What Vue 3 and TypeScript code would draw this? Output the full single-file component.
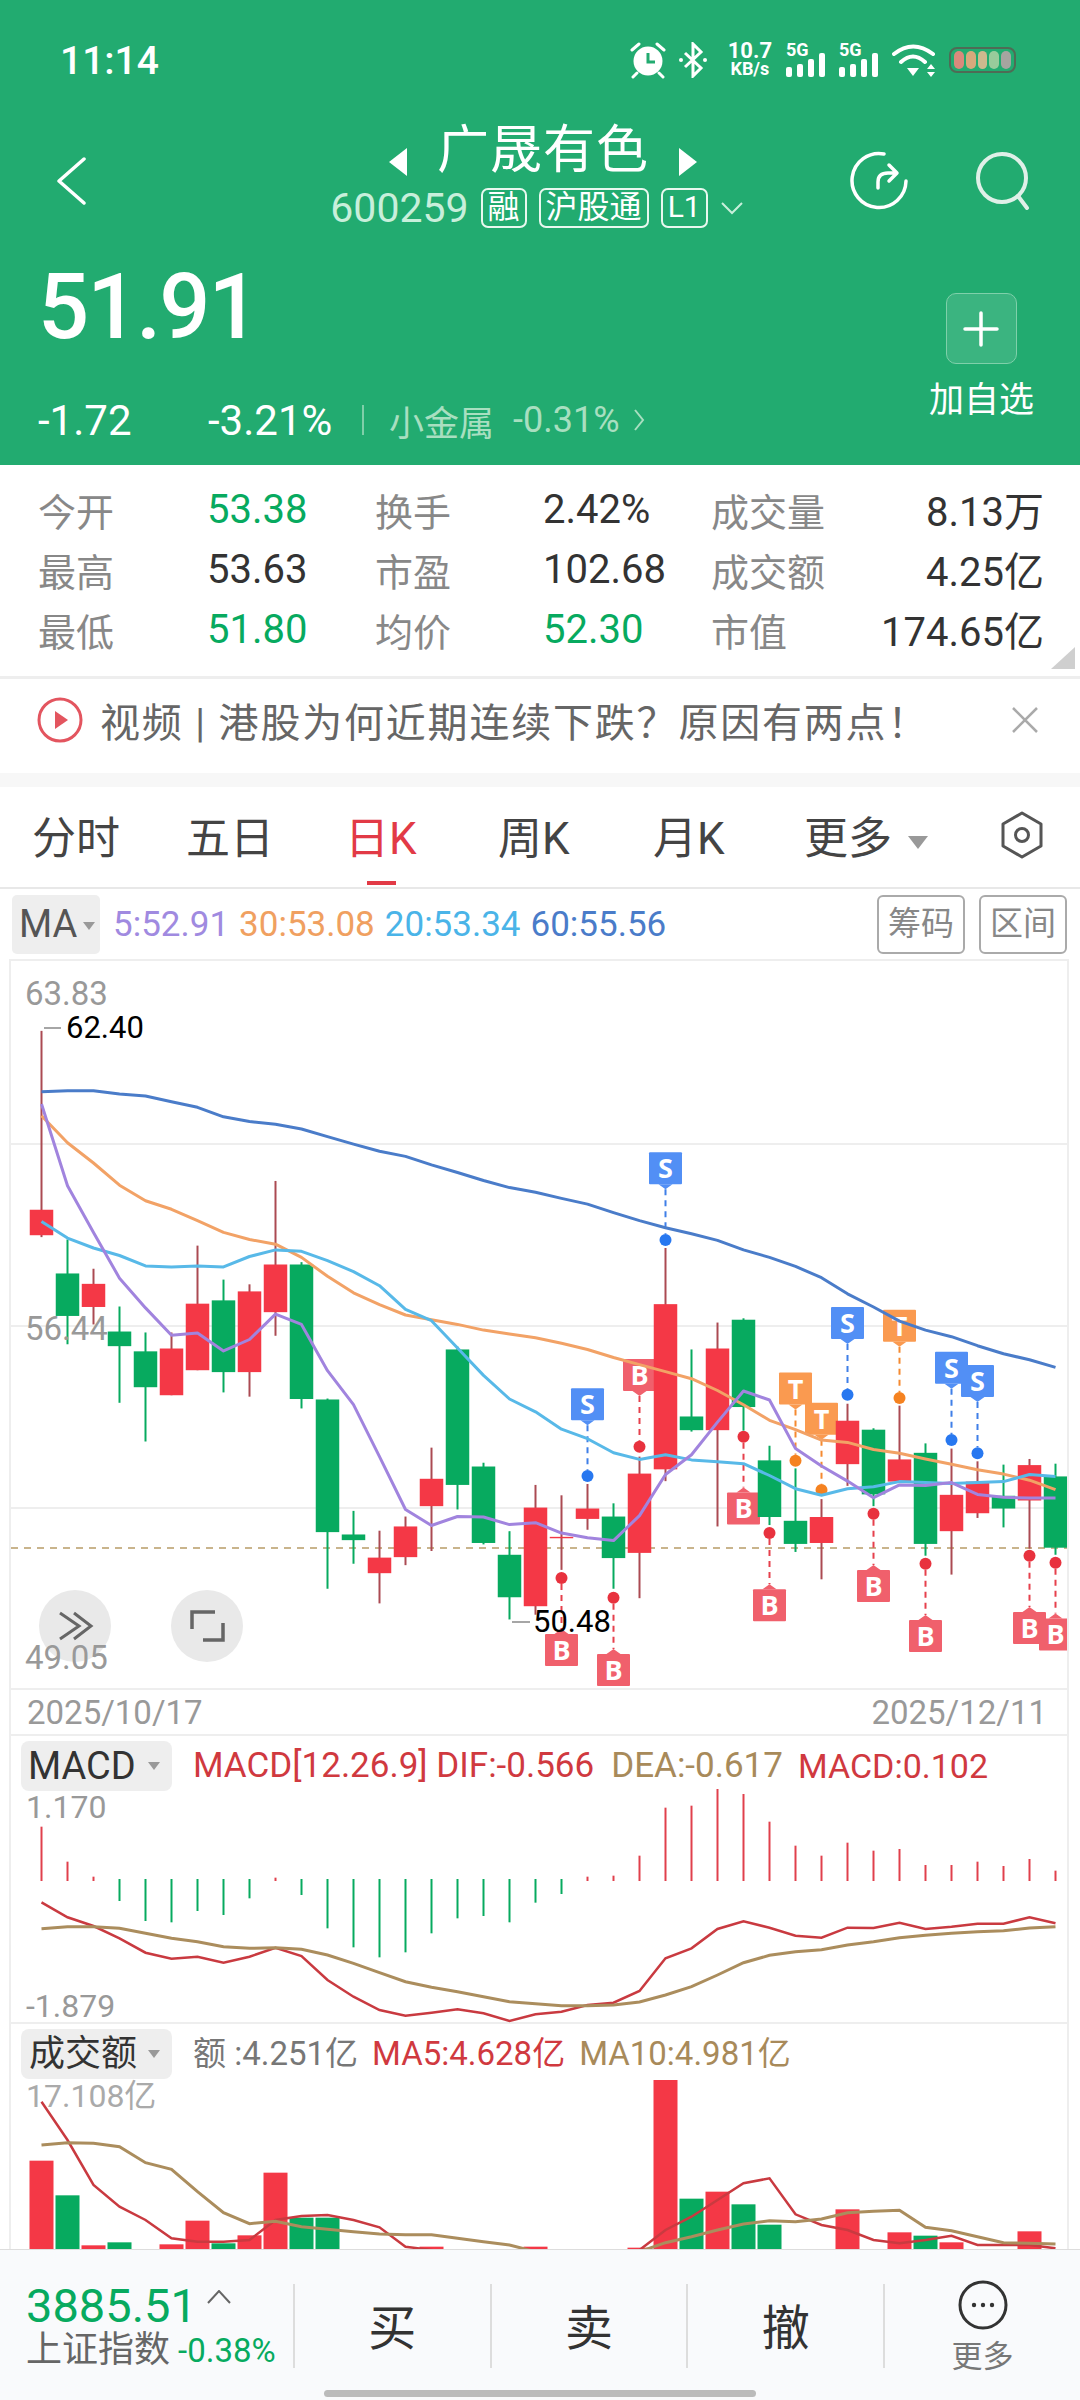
<script setup lang="ts">
interface Candle {
  hi: number
  top: number
  bottom: number
  lo: number
  up: boolean
}

interface Marker {
  i: number
  kind: 'S' | 'T' | 'B'
  tag: number
  dot: number
}

const barX = (i: number) => 41.5 + 26 * i
const priceY = (v: number) => v * 0.472
const macdY = (v: number) => (v - 333) / 3
const volY = (v: number) => (v - 177) / 3

const toPoints = (list: number[], y: (v: number) => number) =>
  list.map((v, i) => `${barX(i)},${y(v).toFixed(1)}`).join(' ')

const raw: [number, number, number, number, number][] = [
  [148, 527, 581, 585, 1], [590, 662, 752, 812, 0], [652, 684, 733, 770, 1], [732, 785, 816, 936, 0],
  [787, 827, 903, 1018, 0], [787, 821, 920, 920, 1], [603, 726, 867, 867, 1], [675, 719, 871, 914, 0],
  [685, 700, 871, 923, 1], [466, 643, 744, 794, 1], [638, 643, 928, 948, 0], [927, 929, 1210, 1330, 0],
  [1165, 1215, 1227, 1277, 0], [1207, 1264, 1297, 1361, 1], [1177, 1198, 1263, 1280, 1], [1031, 1097, 1155, 1250, 1],
  [817, 823, 1110, 1162, 0], [1063, 1071, 1233, 1236, 0], [1208, 1258, 1348, 1395, 0], [1110, 1158, 1367, 1385, 1],
  [1132, 1220, 1223, 1290, 1], [1108, 1160, 1182, 1205, 1], [1149, 1177, 1265, 1330, 0], [1050, 1086, 1254, 1350, 1],
  [608, 727, 1077, 1102, 1], [823, 965, 994, 997, 0], [766, 821, 994, 1198, 1], [757, 760, 945, 995, 0],
  [1027, 1058, 1178, 1195, 0], [1075, 1186, 1235, 1252, 0], [1140, 1178, 1233, 1310, 1], [938, 974, 1066, 1112, 1],
  [990, 993, 1130, 1155, 0], [942, 1056, 1103, 1105, 1], [1022, 1042, 1235, 1260, 0], [1033, 1131, 1208, 1300, 1],
  [1060, 1103, 1170, 1180, 1], [1067, 1133, 1160, 1200, 0], [1055, 1068, 1143, 1245, 1], [1065, 1092, 1243, 1258, 0]
]

const candles: Candle[] = raw.map(([hi, top, bottom, lo, up]) => ({ hi, top, bottom, lo, up: up === 1 }))

const ma60 = [277, 275, 275, 282, 286, 298, 310, 330, 340, 346, 356, 372, 388, 403, 414, 432, 448, 465, 480, 490, 503, 515, 533, 550, 565, 578, 592, 612, 628, 647, 671, 705, 733, 763, 782, 796, 815, 832, 845, 861]
const ma30 = [328, 385, 428, 475, 508, 526, 550, 575, 590, 600, 628, 668, 703, 728, 750, 760, 770, 782, 790, 798, 810, 823, 840, 855, 870, 885, 910, 940, 973, 993, 1015, 1020, 1035, 1043, 1055, 1066, 1078, 1087, 1100, 1120]
const ma20 = [552, 587, 608, 624, 646, 648, 646, 648, 626, 612, 615, 635, 658, 688, 738, 762, 820, 878, 928, 955, 992, 1012, 1042, 1056, 1046, 1057, 1061, 1065, 1090, 1118, 1132, 1118, 1114, 1103, 1105, 1107, 1105, 1103, 1088, 1092]
const ma5 = [303, 476, 575, 672, 735, 793, 788, 826, 802, 748, 770, 868, 940, 1050, 1162, 1196, 1177, 1178, 1194, 1190, 1212, 1222, 1228, 1175, 1088, 1046, 977, 911, 930, 1033, 1070, 1102, 1137, 1110, 1111, 1105, 1130, 1136, 1138, 1138]

const maLines = [
  { color: '#4a7cc9', points: toPoints(ma60, priceY) },
  { color: '#f2a266', points: toPoints(ma30, priceY) },
  { color: '#58b9e8', points: toPoints(ma20, priceY) },
  { color: '#a184de', points: toPoints(ma5, priceY) }
]

const markerColors = {
  S: { tag: '#528ff5', line: '#3f7fe8', dot: '#2878f0' },
  T: { tag: '#fa9a50', line: '#f58a30', dot: '#f58220' },
  B: { tag: '#f0606c', line: '#e6404c', dot: '#e8323e' }
}

const markers: Marker[] = [
  { i: 24, kind: 'S', tag: 405, dot: 591 },
  { i: 21, kind: 'S', tag: 905, dot: 1091 },
  { i: 31, kind: 'S', tag: 733, dot: 919 },
  { i: 35, kind: 'S', tag: 828, dot: 1015 },
  { i: 36, kind: 'S', tag: 856, dot: 1043 },
  { i: 29, kind: 'T', tag: 872, dot: 1059 },
  { i: 30, kind: 'T', tag: 936, dot: 1121 },
  { i: 33, kind: 'T', tag: 739, dot: 926 },
  { i: 23, kind: 'B', tag: 843, dot: 1029 },
  { i: 20, kind: 'B', tag: 1426, dot: 1307 },
  { i: 22, kind: 'B', tag: 1468, dot: 1349 },
  { i: 27, kind: 'B', tag: 1126, dot: 1008 },
  { i: 28, kind: 'B', tag: 1331, dot: 1212 },
  { i: 32, kind: 'B', tag: 1290, dot: 1171 },
  { i: 34, kind: 'B', tag: 1396, dot: 1277 },
  { i: 38, kind: 'B', tag: 1379, dot: 1260 },
  { i: 39, kind: 'B', tag: 1393, dot: 1275 }
]

function tagPointer(m: Marker) {
  const x = barX(m.i)
  const top = priceY(m.tag)
  const above = m.tag < m.dot
  const edge = above ? top + 32 : top
  const tip = above ? edge + 5 : edge - 5
  return `${x - 7},${edge} ${x + 7},${edge} ${x},${tip}`
}

function tagLine(m: Marker) {
  const above = m.tag < m.dot
  return {
    y1: priceY(above ? m.tag : m.dot) + (above ? 37 : 6),
    y2: priceY(above ? m.dot : m.tag) - (above ? 6 : 5)
  }
}

// [end y, is red]
const macdBars: [number, boolean][] = [
  [440, true], [545, true], [590, true], [663, false], [723, false], [727, false], [693, false], [705, false],
  [655, false], [593, true], [645, false], [745, false], [802, false], [832, false], [817, false], [760, false],
  [715, false], [708, false], [727, false], [668, false], [642, false], [590, true], [587, true], [527, true],
  [383, true], [377, true], [327, true], [342, true], [425, true], [497, true], [527, true], [488, true],
  [512, true], [507, true], [555, true], [555, true], [545, true], [558, true], [537, true], [572, true]
]

const dif = [667, 712, 738, 775, 818, 836, 830, 848, 830, 803, 828, 900, 950, 990, 1007, 998, 988, 1000, 1023, 1003, 995, 975, 968, 933, 835, 805, 747, 724, 743, 767, 773, 743, 744, 728, 747, 740, 731, 731, 712, 730]
const dea = [746, 740, 740, 745, 760, 775, 785, 800, 805, 803, 808, 825, 850, 878, 905, 922, 935, 950, 965, 971, 977, 977, 975, 966, 945, 920, 885, 848, 826, 815, 809, 795, 785, 773, 766, 760, 755, 752, 744, 740]

const volumes: { i: number; top: number; up: boolean }[] = [
  { i: 0, top: 422, up: true }, { i: 1, top: 526, up: false }, { i: 2, top: 676, up: true }, { i: 3, top: 667, up: false },
  { i: 5, top: 673, up: true }, { i: 6, top: 602, up: true }, { i: 7, top: 670, up: false }, { i: 8, top: 646, up: true },
  { i: 9, top: 458, up: true }, { i: 10, top: 593, up: false }, { i: 11, top: 593, up: false }, { i: 15, top: 680, up: true },
  { i: 19, top: 680, up: true }, { i: 23, top: 683, up: true }, { i: 24, top: 180, up: true }, { i: 25, top: 536, up: false },
  { i: 26, top: 515, up: true }, { i: 27, top: 553, up: false }, { i: 28, top: 614, up: false }, { i: 31, top: 568, up: true },
  { i: 33, top: 637, up: true }, { i: 34, top: 647, up: false }, { i: 35, top: 667, up: true }, { i: 38, top: 634, up: true }
]

const volMa5 = [245, 360, 495, 560, 600, 655, 665, 665, 660, 600, 588, 585, 600, 622, 680, 690, 700, 700, 700, 700, 700, 700, 700, 690, 630, 590, 540, 490, 475, 583, 615, 630, 660, 670, 660, 647, 675, 675, 675, 685]
const volMa10 = [375, 368, 370, 380, 428, 448, 515, 578, 611, 604, 620, 628, 635, 642, 644, 644, 655, 665, 675, 695, 700, 700, 700, 695, 668, 650, 630, 612, 602, 605, 597, 578, 574, 571, 622, 632, 650, 668, 670, 672]

const stats = [
  ['今开', '53.38', 'down', '换手', '2.42%', '', '成交量', '8.13万', ''],
  ['最高', '53.63', '', '市盈', '102.68', '', '成交额', '4.25亿', ''],
  ['最低', '51.80', 'down', '均价', '52.30', 'down', '市值', '174.65亿', '']
]

const tabs = ['分时', '五日', '日K', '周K', '月K']
</script>

<template>
  <div class="page">
    <header class="head">
      <div class="status-bar">
        <span class="time">11:14</span>
        <div class="status-icons">
          <svg width="36" height="38" viewBox="0 0 36 38">
            <circle cx="18" cy="20" r="14.5" fill="#fff" />
            <path d="M18 12v9h7" fill="none" stroke="#22ab70" stroke-width="3" />
            <path d="M2 9l7-6M34 9l-7-6M7 32l-4 4M29 32l4 4" stroke="#fff" stroke-width="3" stroke-linecap="round" />
          </svg>
          <svg class="bluetooth" width="28" height="36" viewBox="0 0 28 36">
            <path d="M6 11l16 15-8 8V2l8 8-16 15" fill="none" stroke="#fff" stroke-width="3" />
            <circle cx="2" cy="18" r="2" fill="#fff" />
            <circle cx="26" cy="18" r="2" fill="#fff" />
          </svg>
          <div class="net-speed">
            <span class="speed">10.7</span>
            <span class="unit">KB/s</span>
          </div>
          <div v-for="n in 2" :key="n" class="signal">
            <span class="five-g">5G</span>
            <svg width="40" height="24" viewBox="0 0 40 24">
              <rect x="0" y="14" width="6" height="10" rx="2" fill="#fff" />
              <rect x="11" y="11" width="6" height="13" rx="2" fill="#fff" />
              <rect x="22" y="6" width="6" height="18" rx="2" fill="#fff" />
              <rect x="33" y="0" width="6" height="24" rx="2" fill="#fff" />
            </svg>
          </div>
          <svg width="44" height="36" viewBox="0 0 44 36">
            <path d="M2 12Q21-3 41 12M9 20Q21 9 33 20" fill="none" stroke="#fff" stroke-width="4" stroke-linecap="round" />
            <path d="M15 26h12l-6 8z" fill="#fff" />
            <path d="M39 22l-4 5h8zM39 35l-4-5h8z" fill="#fff" />
          </svg>
          <div class="battery">
            <i class="cell-1"></i>
            <i class="cell-2"></i>
            <i class="cell-3"></i>
            <i class="cell-4"></i>
            <i class="cell-5"></i>
          </div>
        </div>
      </div>

      <div class="nav">
        <svg class="back" width="30" height="50" viewBox="0 0 30 50">
          <path d="M27 3L2 25l25 22" fill="none" stroke="#fff" stroke-width="3.5" stroke-linecap="round" stroke-linejoin="round" />
        </svg>
        <div class="title-block">
          <div class="title">
            <span class="arrow arrow-left"></span>
            <span>广晟有色</span>
            <span class="arrow arrow-right"></span>
          </div>
          <div class="subtitle">
            <span class="code">600259</span>
            <span class="tag">融</span>
            <span class="tag">沪股通</span>
            <span class="tag tag-level">L1</span>
            <svg width="24" height="14" viewBox="0 0 24 14">
              <path d="M2 2l10 10L22 2" fill="none" stroke="#c8efdb" stroke-width="2" />
            </svg>
          </div>
        </div>
        <div class="nav-actions">
          <svg width="62" height="62" viewBox="0 0 62 62">
            <path d="M36 4A27 27 0 1 0 58 31" fill="none" stroke="#fff" stroke-width="3.5" stroke-linecap="round" />
            <path d="M30 38v-6q0-9 10-9h8M41 15l8 8-8 8" fill="none" stroke="#fff" stroke-width="3.5" stroke-linecap="round" stroke-linejoin="round" />
          </svg>
          <svg width="56" height="58" viewBox="0 0 56 58">
            <circle cx="28" cy="26" r="24" fill="none" stroke="#dff0e8" stroke-width="4" />
            <path d="M44 44l9 12" stroke="#dff0e8" stroke-width="4" stroke-linecap="round" />
          </svg>
        </div>
      </div>

      <div class="quote">
        <div class="quote-left">
          <div class="price">51.91</div>
          <div class="change">
            <span class="chg-a">-1.72</span>
            <span class="chg-b">-3.21%</span>
            <span class="sep"></span>
            <span class="sector">小金属</span>
            <span class="sector-pct">-0.31%</span>
            <svg width="12" height="24" viewBox="0 0 12 24">
              <path d="M2 2l8 10-8 10" fill="none" stroke="#a8dfc0" stroke-width="2" />
            </svg>
          </div>
        </div>
        <div class="quote-right">
          <div class="add-btn">
            <svg width="36" height="36" viewBox="0 0 36 36">
              <path d="M18 2v32M2 18h32" stroke="#fff" stroke-width="3.5" stroke-linecap="round" />
            </svg>
          </div>
          <span class="add-label">加自选</span>
        </div>
      </div>
    </header>

    <section class="stats">
      <template v-for="(row, r) in stats" :key="r">
        <span class="stat-label">{{ row[0] }}</span>
        <span class="stat-value" :class="row[2]">{{ row[1] }}</span>
        <span class="stat-label">{{ row[3] }}</span>
        <span class="stat-value" :class="row[5]">{{ row[4] }}</span>
        <span class="stat-label">{{ row[6] }}</span>
        <span class="stat-value last">{{ row[7] }}</span>
      </template>
      <span class="corner"></span>
    </section>

    <section class="news">
      <svg width="46" height="46" viewBox="0 0 46 46">
        <circle cx="23" cy="23" r="21" fill="none" stroke="#e3555f" stroke-width="3" />
        <path d="M18 14l13 9-13 9z" fill="#e3555f" />
      </svg>
      <span class="news-text">视频 | 港股为何近期连续下跌？原因有两点！</span>
      <svg class="news-close" width="28" height="26" viewBox="0 0 28 26">
        <path d="M2 1l24 24M26 1L2 25" stroke="#aaa" stroke-width="2.5" />
      </svg>
    </section>
    <div class="band"></div>

    <nav class="tabs">
      <span v-for="(t, i) in tabs" :key="t" class="tab" :class="{ active: i === 2 }">{{ t }}</span>
      <span class="tab more">更多<i class="caret"></i></span>
      <svg class="hexagon" width="44" height="48" viewBox="0 0 44 48">
        <path d="M22 2l19 11v22L22 46 3 35V13z" fill="none" stroke="#555" stroke-width="3" stroke-linejoin="round" />
        <circle cx="22" cy="24" r="6.5" fill="none" stroke="#555" stroke-width="3" />
      </svg>
    </nav>

    <div class="ma-row">
      <span class="ma-btn">MA<i class="caret small"></i></span>
      <span class="ma5">5:52.91</span>
      <span class="ma30">30:53.08</span>
      <span class="ma20">20:53.34</span>
      <span class="ma60">60:55.56</span>
      <span class="outline-btn first">筹码</span>
      <span class="outline-btn">区间</span>
    </div>

    <main class="panels">
      <svg class="kline" width="1056" height="727" viewBox="11 0 1056 727">
        <line v-for="g in [183, 365, 547]" :key="g" x1="11" x2="1068" :y1="g" :y2="g" stroke="#eeeeee" stroke-width="2" />
        <line x1="11" x2="1068" y1="587" y2="587" stroke="#c9b48c" stroke-width="2" stroke-dasharray="7 6" />

        <g v-for="m in markers" :key="m.i">
          <line
            :x1="barX(m.i)"
            :x2="barX(m.i)"
            :y1="tagLine(m).y1"
            :y2="tagLine(m).y2"
            :stroke="markerColors[m.kind].line"
            stroke-width="2"
            stroke-dasharray="6 5"
          />
          <circle :cx="barX(m.i)" :cy="priceY(m.dot)" r="6" :fill="markerColors[m.kind].dot" />
          <rect :x="barX(m.i) - 16.5" :y="priceY(m.tag)" width="33" height="32" rx="1" :fill="markerColors[m.kind].tag" />
          <polygon :points="tagPointer(m)" :fill="markerColors[m.kind].tag" />
          <text :x="barX(m.i)" :y="priceY(m.tag) + 26" class="tag-letter" text-anchor="middle">{{ m.kind }}</text>
        </g>

        <g v-for="(c, i) in candles" :key="i">
          <line
            :x1="barX(i)"
            :x2="barX(i)"
            :y1="priceY(c.hi)"
            :y2="priceY(c.lo)"
            :stroke="c.up ? '#ab4a52' : '#07aa5f'"
            stroke-width="2"
          />
          <rect
            :x="barX(i) - 11.75"
            :y="priceY(c.top)"
            width="23.5"
            :height="priceY(c.bottom) - priceY(c.top)"
            :fill="c.up ? '#f43846' : '#07aa5f'"
          />
        </g>

        <polyline v-for="l in maLines" :key="l.color" :points="l.points" fill="none" :stroke="l.color" stroke-width="3" stroke-linejoin="round" />

        <circle cx="75" cy="665" r="36" fill="#e9e9e9" />
        <path d="M60 652l19 13-19 13M74 652l17 13-17 13" fill="none" stroke="#666" stroke-width="3" />
        <circle cx="207" cy="665" r="36" fill="#e9e9e9" />
        <path d="M192 668v-17h23M223 662v17h-20" fill="none" stroke="#666" stroke-width="3.5" />

        <text x="25" y="44" class="axis">63.83</text>
        <text x="25" y="379" class="axis">56.44</text>
        <text x="25" y="708" class="axis">49.05</text>
        <line x1="44" x2="61" y1="67" y2="67" stroke="#888" stroke-width="1.5" />
        <text x="66" y="77" class="extreme">62.40</text>
        <line x1="512" x2="530" y1="661" y2="661" stroke="#888" stroke-width="1.5" />
        <text x="533" y="671" class="extreme">50.48</text>
      </svg>

      <div class="dates">
        <span>2025/10/17</span>
        <span>2025/12/11</span>
      </div>

      <section class="macd">
        <div class="panel-head macd-head">
          <span class="indicator-btn macd-btn">MACD<i class="caret small"></i></span>
          <span class="red first-legend">MACD[12.26.9] DIF:-0.566</span>
          <span class="tan">DEA:-0.617</span>
          <span class="red macd-value">MACD:0.102</span>
        </div>
        <svg width="1056" height="231" viewBox="11 0 1056 231">
          <line
            v-for="(b, i) in macdBars"
            :key="i"
            :x1="barX(i)"
            :x2="barX(i)"
            :y1="macdY(b[1] ? 603 : 597)"
            :y2="macdY(b[0])"
            :stroke="b[1] ? '#e0404c' : '#07aa5f'"
            stroke-width="2"
          />
          <polyline :points="toPoints(dif, macdY)" fill="none" stroke="#c93a40" stroke-width="2.5" />
          <polyline :points="toPoints(dea, macdY)" fill="none" stroke="#ab8d5d" stroke-width="3" />
          <text x="26" y="27" class="axis-narrow">1.170</text>
          <text x="26" y="226" class="axis-narrow">-1.879</text>
        </svg>
      </section>

      <section class="volume">
        <div class="panel-head">
          <span class="indicator-btn">成交额<i class="caret small"></i></span>
          <span class="gray first-legend">额 :4.251亿</span>
          <span class="red">MA5:4.628亿</span>
          <span class="tan">MA10:4.981亿</span>
        </div>
        <svg width="1056" height="170" viewBox="11 0 1056 170">
          <rect
            v-for="v in volumes"
            :key="v.i"
            :x="barX(v.i) - 12"
            :y="volY(v.top)"
            width="24"
            :height="170 - volY(v.top)"
            :fill="v.up ? '#f43846' : '#07aa5f'"
          />
          <polyline :points="toPoints(volMa5, volY)" fill="none" stroke="#c93a40" stroke-width="2.5" />
          <polyline :points="toPoints(volMa10, volY)" fill="none" stroke="#ab8d5d" stroke-width="3" />
          <text x="26" y="28" class="axis-narrow light">17.108亿</text>
        </svg>
      </section>
    </main>

    <footer class="footer">
      <div class="index">
        <div class="index-top">
          <span class="index-value">3885.51</span>
          <svg width="24" height="14" viewBox="0 0 24 14">
            <path d="M1 13L12 1l11 12" fill="none" stroke="#666" stroke-width="2" />
          </svg>
        </div>
        <div class="index-bottom">
          <span class="index-name">上证指数</span>
          <span class="index-pct">-0.38%</span>
        </div>
      </div>
      <span class="action">买</span>
      <span class="action">卖</span>
      <span class="action">撤</span>
      <div class="action more-action">
        <svg width="50" height="50" viewBox="0 0 50 50">
          <circle cx="25" cy="25" r="23" fill="none" stroke="#333" stroke-width="3" />
          <circle cx="16" cy="25" r="2.2" fill="#333" />
          <circle cx="25" cy="25" r="2.2" fill="#333" />
          <circle cx="34" cy="25" r="2.2" fill="#333" />
        </svg>
        <span>更多</span>
      </div>
      <span class="home-bar"></span>
    </footer>
  </div>
</template>

<style>
html,
body {
  margin: 0;
  background: #fff;
}
</style>

<style scoped>
.page {
  width: 1080px;
  height: 2400px;
  overflow: hidden;
  font-family: Roboto, "Noto Sans CJK SC", sans-serif;
  background: #fff;
}
.head {
  height: 465px;
  background: #22ab70;
  color: #fff;
  box-sizing: border-box;
}
.status-bar {
  height: 115px;
  padding: 41px 64px 0 60px;
  box-sizing: border-box;
  display: flex;
  justify-content: space-between;
}
.time {
  font-size: 39px;
  font-weight: 500;
  line-height: 40px;
}
.status-icons {
  display: flex;
  gap: 13px;
  height: 38px;
  align-items: center;
}
.bluetooth {
  margin-right: 8px;
}
.net-speed {
  display: flex;
  flex-direction: column;
  font-weight: 700;
  line-height: 18px;
  align-items: center;
  margin-right: 1px;
}
.speed {
  font-size: 22px;
}
.unit {
  font-size: 18px;
}
.signal {
  display: flex;
  flex-direction: column;
  line-height: 14px;
}
.five-g {
  font-size: 18px;
  font-weight: 700;
  height: 10px;
}
.battery {
  display: flex;
  gap: 2px;
  width: 67px;
  height: 26px;
  box-sizing: border-box;
  border: 2px solid #4f6b55;
  border-radius: 8px;
  padding: 2px 3px;
}
.battery i {
  flex: 1;
  border-radius: 5px;
}
.cell-1 {
  background: #d98a7c;
}
.cell-2 {
  background: #d6a97c;
}
.cell-3 {
  background: #cdb98e;
}
.cell-4 {
  background: #98cb9b;
}
.cell-5 {
  background: #a5a5a0;
}
.nav {
  display: grid;
  grid-template-columns: 1fr auto 1fr;
  height: 120px;
  align-items: center;
}
.back {
  margin: 12px 0 0 57px;
}
.title-block {
  display: flex;
  flex-direction: column;
  align-items: center;
}
.title {
  display: flex;
  align-items: center;
  font-size: 52px;
  line-height: 64px;
  gap: 30px;
  letter-spacing: 1px;
  margin: -4px 0 5px 6px;
}
.arrow {
  width: 0;
  height: 0;
  border-top: 14px solid transparent;
  border-bottom: 14px solid transparent;
  margin-top: 22px;
}
.arrow-left {
  border-right: 18px solid #fff;
}
.arrow-right {
  border-left: 18px solid #fff;
}
.subtitle {
  display: flex;
  align-items: center;
  height: 40px;
  color: #fff;
  gap: 12px;
  margin-right: 6px;
}
.code {
  font-size: 41px;
  color: #c8efdb;
}
.tag {
  height: 40px;
  box-sizing: border-box;
  border: 2px solid #e8f8ef;
  border-radius: 7px;
  font-size: 32px;
  line-height: 34px;
  padding: 0 5px;
}
.tag-level {
  font-size: 30px;
}
.nav-actions {
  display: flex;
  justify-content: flex-end;
  padding: 12px 50px 0 0;
  gap: 64px;
  align-items: center;
}
.quote {
  display: flex;
  justify-content: space-between;
  padding: 20px 46px 0 38px;
}
.price {
  font-size: 90px;
  line-height: 104px;
  font-weight: 500;
  letter-spacing: -2px;
  padding-top: 1px;
}
.change {
  display: flex;
  align-items: center;
  height: 50px;
  margin-top: 35px;
  font-size: 42px;
}
.chg-a {
  width: 170px;
}
.chg-b {
  width: 154px;
}
.sep {
  width: 2px;
  height: 30px;
  background: #7fcfa9;
  margin-right: 25px;
}
.sector {
  font-size: 35px;
  color: #a8dfc0;
  margin-right: 19px;
}
.sector-pct {
  font-size: 36px;
  color: #a8dfc0;
  margin-right: 13px;
}
.quote-right {
  display: flex;
  flex-direction: column;
  align-items: center;
  margin-top: 38px;
}
.add-btn {
  width: 71px;
  height: 71px;
  box-sizing: border-box;
  border: 1.5px solid #7fd0aa;
  border-radius: 10px;
  background: #3bb480;
  display: flex;
  align-items: center;
  justify-content: center;
}
.add-label {
  font-size: 35px;
  line-height: 40px;
  margin-top: 17px;
}
.stats {
  position: relative;
  height: 211px;
  box-sizing: border-box;
  padding: 14px 36px 0 38px;
  display: grid;
  grid-template-columns: 169px 168px 168px 168px 130px 203px;
  grid-auto-rows: 60px;
  align-items: center;
}
.stat-label {
  font-size: 38px;
  color: #888;
  white-space: nowrap;
}
.stat-value {
  font-size: 40px;
  color: #333;
  white-space: nowrap;
}
.stat-value.down {
  color: #07aa5f;
}
.stat-value.last {
  text-align: right;
}
.corner {
  position: absolute;
  right: 5px;
  bottom: 7px;
  width: 0;
  height: 0;
  border-left: 24px solid transparent;
  border-bottom: 22px solid #cfcfcf;
}
.news {
  height: 97px;
  box-sizing: border-box;
  border-top: 3px solid #eeeeee;
  padding: 0 41px 12px 37px;
  display: flex;
  align-items: center;
}
.news-text {
  font-size: 40px;
  color: #666;
  margin-left: 17px;
  letter-spacing: 1.8px;
}
.news-close {
  margin-left: auto;
}
.band {
  height: 14px;
  background: #f7f7f7;
}
.tabs {
  height: 102px;
  box-sizing: border-box;
  border-bottom: 2px solid #e8e8e8;
  padding: 0 36px 4px 32px;
  display: grid;
  grid-template-columns: 154px 159px 153px 155px 151px auto 1fr;
  align-items: center;
}
.tab {
  position: relative;
  font-size: 44px;
  color: #444;
}
.tab.active {
  color: #e23a46;
}
.tab.active::after {
  content: "";
  position: absolute;
  left: 22px;
  top: 78px;
  width: 29px;
  height: 4px;
  background: #e23a46;
}
.caret {
  display: inline-block;
  width: 0;
  height: 0;
  border-left: 10px solid transparent;
  border-right: 10px solid transparent;
  border-top: 13px solid #999;
  margin-left: 16px;
  vertical-align: middle;
}
.caret.small {
  border-left-width: 6px;
  border-right-width: 6px;
  border-top-width: 8px;
  margin-left: 6px;
}
.hexagon {
  justify-self: end;
}
.ma-row {
  height: 70px;
  display: flex;
  align-items: center;
  padding: 0 13px 0 12px;
  font-size: 35px;
  gap: 10px;
}
.ma-btn {
  width: 88px;
  height: 59px;
  line-height: 59px;
  box-sizing: border-box;
  padding-left: 7px;
  background: #eeeeee;
  border-radius: 5px;
  font-size: 38px;
  color: #555;
  white-space: nowrap;
  margin-right: 3px;
}
.ma5 {
  color: #a08ae0;
}
.ma30 {
  color: #f0a060;
}
.ma20 {
  color: #4ab4e8;
}
.ma60 {
  color: #4a7cc9;
}
.outline-btn {
  width: 88px;
  height: 59px;
  box-sizing: border-box;
  border: 2px solid #aaa;
  border-radius: 6px;
  font-size: 33px;
  color: #888;
  text-align: center;
  line-height: 53px;
  margin-left: 4px;
}
.outline-btn.first {
  margin-left: auto;
}
.panels {
  margin: 0 11px 0 9px;
  border-left: 2px solid #eeeeee;
  border-right: 2px solid #eeeeee;
  border-top: 2px solid #eeeeee;
  height: 1288px;
  overflow: hidden;
}
.panels svg {
  display: block;
  overflow: visible;
}
.kline {
  border-bottom: 2px solid #eeeeee;
}
.tag-letter {
  font-family: "Open Sans", sans-serif;
  font-size: 27px;
  font-weight: 700;
  fill: #fff;
}
.axis {
  font-size: 33px;
  fill: #999;
}
.extreme {
  font-size: 31px;
  fill: #000;
}
.axis-narrow {
  font-size: 32px;
  fill: #999;
}
.axis-narrow.light {
  fill: #aaa;
}
.dates {
  height: 44px;
  display: flex;
  justify-content: space-between;
  align-items: center;
  padding: 0 20px 0 16px;
  font-size: 33px;
  color: #999;
  border-bottom: 2px solid #eeeeee;
}
.macd {
  height: 286px;
  border-bottom: 2px solid #eeeeee;
}
.panel-head {
  height: 55px;
  display: flex;
  align-items: flex-end;
  font-size: 33px;
  line-height: 50px;
  gap: 14px;
  padding-left: 10px;
}
.macd-head {
  font-size: 35px;
  gap: 17px;
}
.macd-value {
  font-size: 34px;
  margin-left: -2px;
}
.indicator-btn {
  display: flex;
  align-items: center;
  width: 151px;
  height: 50px;
  box-sizing: border-box;
  padding-left: 8px;
  background: #eeeeee;
  border-radius: 8px;
  font-size: 36px;
  color: #333;
  white-space: nowrap;
}
.macd-btn {
  padding-left: 7px;
  font-size: 38px;
}
.indicator-btn .caret {
  margin: 0 12px 0 auto;
}
.first-legend {
  margin-left: 7px;
}
.macd-head .first-legend {
  margin-left: 4px;
}
.red {
  color: #d0393f;
}
.tan {
  color: #a88a5a;
}
.gray {
  color: #777;
}
.footer {
  position: relative;
  height: 151px;
  box-sizing: border-box;
  border-top: 1px solid #dddddd;
  background: #f9fafc;
  display: flex;
  padding-top: 34px;
}
.index {
  width: 267px;
  padding-left: 26px;
  display: flex;
  flex-direction: column;
  height: 84px;
  justify-content: space-between;
}
.index-top {
  display: flex;
  align-items: flex-start;
  gap: 10px;
}
.index-top svg {
  margin-top: 6px;
}
.index-value {
  font-size: 47px;
  line-height: 44px;
  color: #07aa5f;
}
.index-bottom {
  display: flex;
  align-items: center;
  gap: 8px;
  white-space: nowrap;
  margin-bottom: -2px;
}
.index-name {
  font-size: 36px;
  line-height: 40px;
  color: #666;
}
.index-pct {
  font-size: 33px;
  color: #07aa5f;
}
.action {
  width: 197px;
  height: 84px;
  border-left: 2px solid #dddddd;
  box-sizing: border-box;
  font-size: 48px;
  color: #333;
  display: flex;
  align-items: center;
  justify-content: center;
  padding-bottom: 4px;
}
.more-action {
  flex-direction: column;
  justify-content: flex-start;
  font-size: 31px;
  color: #777;
  line-height: 36px;
  gap: 9px;
  padding: 0;
}
.more-action svg {
  flex: none;
  margin-top: -4px;
}
.home-bar {
  position: absolute;
  left: 324px;
  top: 140px;
  width: 432px;
  height: 7px;
  border-radius: 4px;
  background: #bbbbbb;
}
</style>
